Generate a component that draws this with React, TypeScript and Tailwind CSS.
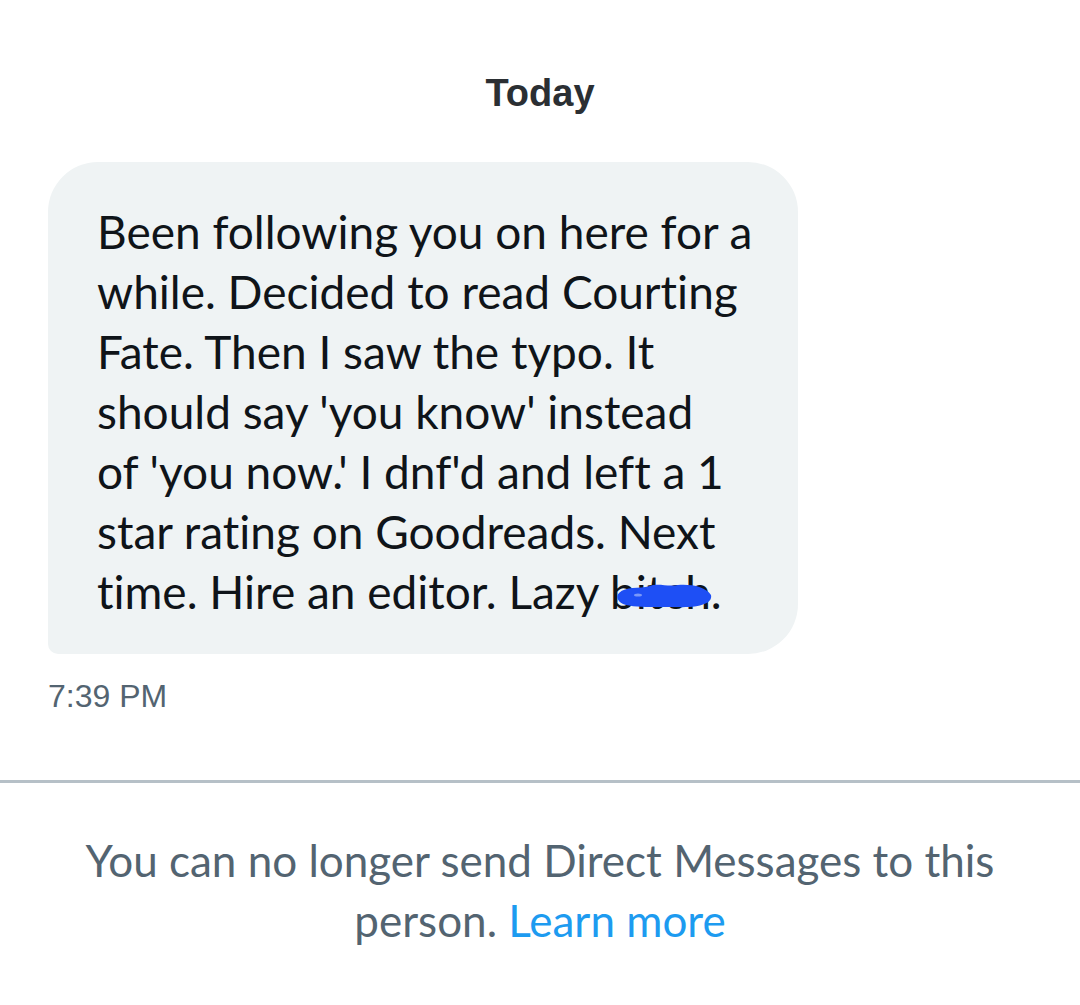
import React from "react";

export default function App() {
  const lines = [
    "Been following you on here for a",
    "while. Decided to read Courting",
    "Fate. Then I saw the typo. It",
    "should say 'you know' instead",
    "of 'you now.' I dnf'd and left a 1",
    "star rating on Goodreads. Next",
  ];
  return (
    <div className="w-[1080px] h-[1005px] bg-white overflow-hidden flex flex-col">
      <div className="pt-[70px] h-[162px] text-center text-[38px] font-bold text-[#2b2f33] leading-[46px]" style={{ fontFamily: '"Liberation Sans", Arial, sans-serif' }}>
        Today
      </div>
      <div className="pl-[48px]">
        <div
          className="w-[750px] h-[492px] bg-[#eff3f4] rounded-[50px] rounded-bl-[10px] pl-[49px] pr-[20px] pt-[40px] text-[46px] leading-[60px] text-[#0f1419] [font-variant-ligatures:none]"
          style={{ fontFamily: 'Lato, "Noto Sans", sans-serif' }}
        >
          {lines.map((l) => (
            <div key={l} className="whitespace-nowrap">{l}</div>
          ))}
          <div className="whitespace-nowrap">
            time. Hire an editor. Lazy{" "}
            <span className="relative">
              bitch
              <svg className="absolute left-[6px] top-[18px] w-[98px] h-[28px]" viewBox="0 0 98 28">
                <path d="M3 11 C10 4 22 7 34 4 C42 1 52 5 62 3 C76 2 90 5 95 13 C97 22 82 26 60 25 C40 25 18 26 7 22 C1 19 0 14 3 11 Z" fill="#1e4ff5" />
                <ellipse cx="22" cy="13" rx="4" ry="1.6" fill="#7a98f8" />
              </svg>
            </span>
            .
          </div>
        </div>
      </div>
      <div className="pl-[48px] pt-[24px] text-[32px] text-[#536471] leading-[36px]" style={{ fontFamily: '"Liberation Sans", Arial, sans-serif' }}>
        7:39 PM
      </div>
      <div className="mt-[66px] h-[3px] bg-[#b6c0c7]" />
      <div
        className="pt-[47px] text-center text-[44px] leading-[60px] text-[#536471] [font-variant-ligatures:none]"
        style={{ fontFamily: 'Lato, "Noto Sans", sans-serif' }}
      >
        <div className="whitespace-nowrap">You can no longer send Direct Messages to this</div>
        <div className="whitespace-nowrap">
          person. <span className="text-[#1d9bf0]">Learn more</span>
        </div>
      </div>
    </div>
  );
}
